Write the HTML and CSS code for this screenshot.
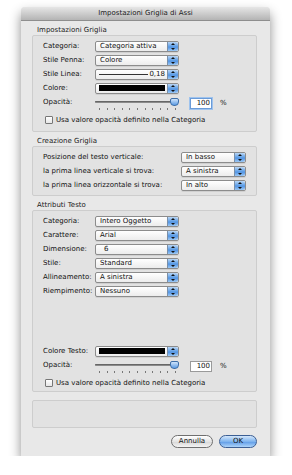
FILE: index.html
```html
<!DOCTYPE html>
<html lang="it">
<head>
  <meta charset="UTF-8" />
  <title>Impostazioni Griglia di Assi</title>
  <link rel="stylesheet" href="styles.css">
</head>
<body>
  <div class="window">
    <div class="titlebar">Impostazioni Griglia di Assi</div>

    <div class="content">
      <!-- Impostazioni Griglia -->
      <div class="group-title">Impostazioni Griglia</div>
      <div class="group g1">
        <div class="row">
          <span class="label">Categoria:</span>
          <div class="popup"><span class="popup-text">Categoria attiva</span><span class="stepper"></span></div>
        </div>
        <div class="row">
          <span class="label">Stile Penna:</span>
          <div class="popup"><span class="popup-text">Colore</span><span class="stepper"></span></div>
        </div>
        <div class="row">
          <span class="label">Stile Linea:</span>
          <div class="popup"><span class="line-sample"></span><span class="line-value">0,18</span><span class="stepper"></span></div>
        </div>
        <div class="row">
          <span class="label">Colore:</span>
          <div class="popup"><span class="swatch"></span><span class="stepper"></span></div>
        </div>
        <div class="row slider-row">
          <span class="label">Opacità:</span>
          <div class="slider">
            <div class="track"><span class="thumb"></span></div>
            <div class="ticks"><i></i><i></i><i></i><i></i><i></i><i></i><i></i><i></i><i></i><i></i><i></i></div>
          </div>
          <span class="field focused">100</span>
          <span class="unit">%</span>
        </div>
        <label class="check-row"><span class="checkbox"></span>Usa valore opacità definito nella Categoria</label>
      </div>

      <!-- Creazione Griglia -->
      <div class="group-title">Creazione Griglia</div>
      <div class="group g2">
        <div class="row">
          <span class="label wide">Posizione del testo verticale:</span>
          <div class="popup short"><span class="popup-text">In basso</span><span class="stepper"></span></div>
        </div>
        <div class="row">
          <span class="label wide">la prima linea verticale si trova:</span>
          <div class="popup short"><span class="popup-text">A sinistra</span><span class="stepper"></span></div>
        </div>
        <div class="row">
          <span class="label wide">la prima linea orizzontale si trova:</span>
          <div class="popup short"><span class="popup-text">In alto</span><span class="stepper"></span></div>
        </div>
      </div>

      <!-- Attributi Testo -->
      <div class="group-title">Attributi Testo</div>
      <div class="group g3">
        <div class="row">
          <span class="label">Categoria:</span>
          <div class="popup"><span class="popup-text">Intero Oggetto</span><span class="stepper"></span></div>
        </div>
        <div class="row">
          <span class="label">Carattere:</span>
          <div class="popup"><span class="popup-text">Arial</span><span class="stepper"></span></div>
        </div>
        <div class="row">
          <span class="label">Dimensione:</span>
          <div class="popup"><span class="popup-text indent">6</span><span class="stepper"></span></div>
        </div>
        <div class="row">
          <span class="label">Stile:</span>
          <div class="popup"><span class="popup-text">Standard</span><span class="stepper"></span></div>
        </div>
        <div class="row">
          <span class="label">Allineamento:</span>
          <div class="popup"><span class="popup-text">A sinistra</span><span class="stepper"></span></div>
        </div>
        <div class="row">
          <span class="label">Riempimento:</span>
          <div class="popup"><span class="popup-text">Nessuno</span><span class="stepper"></span></div>
        </div>

        <div class="spacer"></div>

        <div class="row">
          <span class="label">Colore Testo:</span>
          <div class="popup"><span class="swatch"></span><span class="stepper"></span></div>
        </div>
        <div class="row slider-row">
          <span class="label">Opacità:</span>
          <div class="slider">
            <div class="track"><span class="thumb"></span></div>
            <div class="ticks"><i></i><i></i><i></i><i></i><i></i><i></i><i></i><i></i><i></i><i></i><i></i></div>
          </div>
          <span class="field">100</span>
          <span class="unit">%</span>
        </div>
        <label class="check-row"><span class="checkbox"></span>Usa valore opacità definito nella Categoria</label>
      </div>

      <!-- empty preview box -->
      <div class="group g4"></div>

      <div class="buttons">
        <span class="btn">Annulla</span>
        <span class="btn default">OK</span>
      </div>
    </div>
  </div>
</body>
</html>
```

FILE: styles.css
```css
body {
  margin: 0;
  background: #fff;
  font-family: 'DejaVu Sans', sans-serif;
  font-size: 7px;
  color: #111;
}

.window {
  margin: 7px 0 0 21px;
  width: 249px;
  height: 449px;
  background: #e8e8e8;
  border-radius: 4px 4px 0 0;
  box-shadow: 0 6px 12px rgba(0, 0, 0, 0.45);
  display: flex;
  flex-direction: column;
}

.titlebar {
  height: 13px;
  line-height: 13px;
  text-align: center;
  font-size: 7px;
  color: #222;
  border-radius: 4px 4px 0 0;
  background: linear-gradient(to bottom, #e6e6e6, #b4b4b4);
  border-bottom: 1px solid #8e8e8e;
}

.content {
  flex: 1;
  display: flex;
  flex-direction: column;
  padding: 0 13px 0 11px;
}

.group-title {
  height: 8px;
  line-height: 8px;
  margin: 5px 0 1px 5px;
  color: #222;
}

.group {
  border: 1px solid #cdcdcd;
  border-radius: 2px;
  background: #e2e2e2;
  padding: 3px 0 0 10px;
}

.g1 { height: 92px; }
.g2 { height: 45px; }
.g3 { height: 177px; }

.g4 {
  height: 23px;
  margin-top: 8px;
}

.row {
  display: flex;
  align-items: center;
  height: 14px;
}

.label {
  width: 52px;
  flex: none;
}

.label.wide {
  width: 138px;
}

.popup {
  position: relative;
  display: flex;
  align-items: center;
  width: 82px;
  height: 9px;
  border: 1px solid #8c8c8c;
  border-radius: 2px;
  background: linear-gradient(to bottom, #ffffff, #ececec);
  box-shadow: 0 1px 0 rgba(0, 0, 0, 0.08);
}

.popup.short {
  width: 63px;
}

.popup-text {
  flex: 1;
  padding-left: 4px;
  white-space: nowrap;
}

.popup-text.indent {
  padding-left: 8px;
}

.stepper {
  position: relative;
  flex: none;
  width: 10px;
  height: 9px;
  margin-left: auto;
  border-left: 1px solid #7a8fa8;
  border-radius: 0 2px 2px 0;
  background: linear-gradient(to bottom, #b9d6f5, #5e9ee6 50%, #4a8de0 51%, #9cc9f5);
}

/* small up / down arrows */
.stepper::before,
.stepper::after {
  content: "";
  position: absolute;
  left: 3px;
  border-left: 2px solid transparent;
  border-right: 2px solid transparent;
}

.stepper::before {
  top: 1px;
  border-bottom: 2px solid #111;
}

.stepper::after {
  bottom: 1px;
  border-top: 2px solid #111;
}

.line-sample {
  flex: 1;
  height: 1px;
  margin: 0 1px 0 3px;
  background: #333;
}

.line-value {
  padding-right: 2px;
}

.swatch {
  flex: 1;
  height: 6px;
  margin: 0 2px 0 3px;
  background: #000;
}

.slider-row {
  height: 19px;
  align-items: flex-start;
  padding-top: 3px;
  box-sizing: border-box;
}

.slider {
  width: 83px;
  display: flex;
  flex-direction: column;
}

.track {
  position: relative;
  height: 2px;
  margin-top: 3px;
  border-radius: 1px;
  background: #8a8a8a;
  box-shadow: inset 0 1px 0 #666;
}

.thumb {
  position: absolute;
  right: -1px;
  top: -3px;
  width: 7px;
  height: 6px;
  border: 1px solid #3d6ea8;
  border-radius: 2px 2px 4px 4px;
  background: linear-gradient(to bottom, #cfe4fb, #5d9ce4);
}

.ticks {
  display: flex;
  justify-content: space-between;
  margin: 5px 0 0 4px;
  width: 77px;
}

.ticks i {
  width: 1px;
  height: 2px;
  background: #777;
}

.field {
  width: 19px;
  height: 9px;
  line-height: 9px;
  margin: 0 0 0 12px;
  padding-right: 1px;
  text-align: right;
  background: #fff;
  border: 1px solid #9a9a9a;
  box-sizing: content-box;
}

.field.focused {
  border-color: #6a9bd8;
  box-shadow: 0 0 0 1px #9ec3ee;
}

.unit {
  margin-left: 8px;
  line-height: 11px;
}

.check-row {
  display: flex;
  align-items: center;
  height: 12px;
  margin: 0 0 0 2px;
}

.checkbox {
  width: 6px;
  height: 6px;
  margin-right: 3px;
  border: 1px solid #777;
  border-radius: 1px;
  background: linear-gradient(to bottom, #fff, #e6e6e6);
}

.spacer {
  height: 46px;
}

.buttons {
  display: flex;
  justify-content: flex-end;
  gap: 6px;
  margin-top: 7px;
}

.btn {
  height: 11px;
  line-height: 11px;
  width: 40px;
  text-align: center;
  border: 1px solid #6f6f6f;
  border-radius: 7px;
  background: linear-gradient(to bottom, #ffffff, #e4e4e4 50%, #d6d6d6 51%, #f4f4f4);
}

.btn.default {
  width: 36px;
  border-color: #3c5f94;
  background: linear-gradient(to bottom, #d4e7fb, #7fb4ee 50%, #5c9ae6 51%, #aed4fa);
}
```
